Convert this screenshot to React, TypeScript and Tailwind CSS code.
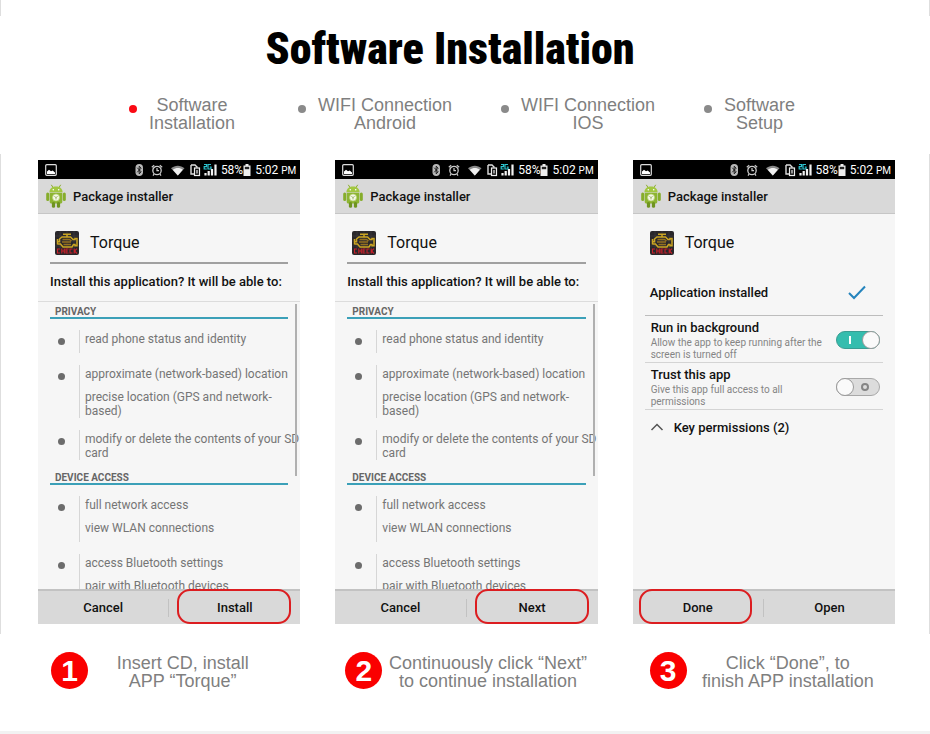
import type { ReactNode } from 'react'

const permissionGroups = [
  {
    title: 'PRIVACY',
    items: [
      ['read phone status and identity'],
      ['approximate (network-based) location', 'precise location (GPS and network-based)'],
      ['modify or delete the contents of your SD card'],
    ],
  },
  {
    title: 'DEVICE ACCESS',
    items: [
      ['full network access', 'view WLAN connections'],
      ['access Bluetooth settings', 'pair with Bluetooth devices'],
    ],
  },
]

const tabs = [
  { first: 'Software', second: 'Installation', active: true },
  { first: 'WIFI Connection', second: 'Android', active: false },
  { first: 'WIFI Connection', second: 'IOS', active: false },
  { first: 'Software', second: 'Setup', active: false },
]

const steps = [
  { first: 'Insert CD, install', second: 'APP “Torque”', pad: 'pl-[13px] pr-[23px]' },
  { first: 'Continuously click “Next”', second: 'to continue installation', pad: 'pl-[10px] pr-1' },
  { first: 'Click “Done”, to', second: 'finish APP installation', pad: 'pl-[17px] pr-[6px]' },
]

function StatusIcons() {
  return (
    <svg viewBox="0 0 84 14" className="h-[14px] w-[84px]" fill="none">
      {/* bluetooth */}
      <rect x="1.5" y="1" width="7.5" height="12" rx="3.7" fill="#b8b8b8" />
      <path d="M3.2 4.7l4 4.2-2 1.9V3.2l2 1.9-4 4.2" stroke="#111" strokeWidth="0.9" />
      {/* alarm */}
      <circle cx="23" cy="7.5" r="4.2" stroke="#ccc" strokeWidth="1.3" />
      <path d="M23 5v2.7h2M17.8 4.2l2.4-2M28.2 4.2l-2.4-2M20 11.2l-1 1.4M26 11.2l1 1.4" stroke="#ccc" strokeWidth="1.2" />
      {/* wifi */}
      <path d="M37 5.2c4-3.4 9.6-3.4 13.5 0L43.8 12.5z" fill="#8a8a8a" />
      <path d="M38.8 6.8c3-2.3 7.2-2.3 10 0L43.8 12.5z" fill="#f0f0f0" />
      {/* sim */}
      <path d="M57 2h4l2.5 2.5M57 2v9h3" stroke="#ddd" strokeWidth="1.4" />
      <rect x="60.5" y="5" width="5" height="7.5" fill="#111" stroke="#eee" strokeWidth="1.2" />
      <path d="M63 7v3.5" stroke="#eee" strokeWidth="1.2" />
      {/* signal */}
      <path d="M70 1.5h2.5v2.2H70.2v2.3h2.6M77 1.5h-3v4.5h3V4h-1.3" stroke="#2cc4d0" strokeWidth="1.2" />
      <path d="M71.5 12.5v-2.5M74.7 12.5v-4.5M78 12.5V6M81.5 12.5V1.5" stroke="#f2f2f2" strokeWidth="2.2" />
    </svg>
  )
}

function StatusBar() {
  return (
    <div className="flex h-[19px] items-center bg-black pr-1 pl-[7px] text-[12px] leading-4 text-white">
      <svg viewBox="0 0 12 12" className="mr-auto size-3" fill="none">
        <rect x="0.7" y="0.7" width="10.6" height="10.6" rx="1" stroke="#ddd" strokeWidth="1.2" />
        <path d="M2 10V7.5l2-1.7 2 1.5 1.7-.8L10 8.5V10z" fill="#fff" />
      </svg>
      <StatusIcons />
      <span className="ml-[3px]">58%</span>
      <svg viewBox="0 0 8 12" className="h-3 w-2">
        <path d="M2.5 0h3v1.5H7.5V12H.5V1.5h2z" fill="#eee" />
        <path d="M1.8 2.8h4.4v2.4H1.8z" fill="#222" />
      </svg>
      <span className="ml-1">
        5:02 <span className="text-[10px] leading-none">PM</span>
      </span>
    </div>
  )
}

function AndroidIcon() {
  return (
    <svg viewBox="0 0 20 24" className="h-6 w-5">
      <path d="M5.3 0.8l2 3.2M14.7 0.8l-2 3.2" stroke="#8aab2c" strokeWidth="1" />
      <path d="M3.4 8.2C3.6 4.6 6.3 2.6 10 2.6s6.4 2 6.6 5.6z" fill="#a2c740" />
      <circle cx="7.3" cy="5.8" r="0.8" fill="#fff" />
      <circle cx="12.7" cy="5.8" r="0.8" fill="#fff" />
      <rect x="0.2" y="8.5" width="3" height="8.5" rx="1.5" fill="#86ad2b" />
      <rect x="16.8" y="8.5" width="3" height="8.5" rx="1.5" fill="#86ad2b" />
      <path d="M3.7 8.8h12.6v9c0 1-.8 1.8-1.8 1.8h-9c-1 0-1.800-.8-1.800-1.800z" fill="#8db531" />
      <rect x="5.9" y="18" width="3.2" height="5.7" rx="1.5" fill="#6f9420" />
      <rect x="10.9" y="18" width="3.2" height="5.7" rx="1.5" fill="#6f9420" />
      <circle cx="10" cy="13.5" r="3.5" fill="#f4f8e6" stroke="#b9d179" strokeWidth="0.7" />
      <path d="M8.4 12.4l1.6 1.2 1.6-1.2M10 13.6v1.8" stroke="#9fb56a" strokeWidth="1" fill="none" />
    </svg>
  )
}

function TorqueIcon() {
  return (
    <svg viewBox="0 0 24 24" className="size-6" fill="none">
      <rect width="24" height="24" rx="2" fill="#29272a" />
      <path d="M0 5h24M0 10h24M0 15h24M5 0v17M12 0v17M19 0v17" stroke="#413d40" strokeWidth="0.6" />
      <path
        d="M8 3.3h8M12 3.3v2.5M2.5 13.5V8M2.5 10.7h2V8L7 6h8.500L18 8.500h2v-1h2v7.200h-2v-1.200h-1.500L17 16H8l-2.500-3h-3"
        stroke="#cba522"
        strokeWidth="1.5"
      />
      <path d="M7.5 8.5h7l2 1.500M7 11h9M8.500 13.500H16" stroke="#94701f" strokeWidth="1.5" />
      {/* red warning strip under the engine */}
      <path
        d="M5 18H2.5v4H5M6.800 17.500v5M9.300 17.500v5M6.800 20h2.500M13.500 18H11v4h2.500M11 20h2M17.500 18H15v4h2.500M19.200 17.500v5M22 17.700L19.500 20l2.500 2.500"
        stroke="#c8202a"
        strokeWidth="1.1"
      />
    </svg>
  )
}

interface FooterButton {
  label: string
  highlight?: string
}

function Phone({ children, actions }: { children: ReactNode; actions: FooterButton[] }) {
  return (
    <article className="flex h-[464px] min-w-0 flex-col bg-[#f6f6f6] font-['Roboto',sans-serif] text-[13px] leading-[15px] text-[#111]">
      <StatusBar />
      <div className="flex h-[35px] shrink-0 items-center gap-[7px] border-b border-[#c6c6c6] bg-[#d9d9d9] pl-2">
        <AndroidIcon />
        <h2 className="font-medium">Package installer</h2>
      </div>
      <div className="flex h-[48px] shrink-0 items-center gap-[11px] pt-[10px] pl-[17px] text-[16px] leading-5">
        <TorqueIcon />
        Torque
      </div>
      {children}
      <footer className="flex h-[35px] shrink-0 items-center border-t-2 border-[#c2c2c2] bg-[#d9d9d9]">
        {actions.map((action, i) => (
          <div key={action.label} className="relative flex flex-1 items-center self-stretch">
            <button type="button" className="h-full flex-1 font-medium">
              {action.label}
            </button>
            {i === 0 && <span className="h-[18px] w-px bg-[#c2c2c2]" />}
            {action.highlight && (
              <span
                className={`pointer-events-none absolute -top-[2px] bottom-0 rounded-[13px] border-2 border-[#dc1d20] ${action.highlight}`}
              />
            )}
          </div>
        ))}
      </footer>
    </article>
  )
}

function PermissionsPhone({ next }: { next: string }) {
  return (
    <Phone actions={[{ label: 'Cancel' }, { label: next, highlight: 'left-2 right-[9px]' }]}>
      <p className="mx-3 flex h-[39px] shrink-0 items-center border-t-2 border-[#a0a0a0] pb-[2px] font-medium whitespace-nowrap">
        Install this application? It will be able to:
      </p>
      <div className="relative min-h-0 flex-1 overflow-hidden border-t border-[#dcdcdc]">
        {permissionGroups.map((group) => (
          <section key={group.title} className="pb-2">
            <h3 className="mx-3 border-b-2 border-[#3ba0b8] pt-[5px] pl-[5px] text-[10px] leading-[10px] font-bold text-[#666]">
              {group.title}
            </h3>
            <ul className="flex flex-col gap-3 pt-[11px] pl-5 text-[12px] leading-[14px] text-[#757575]">
              {group.items.map((lines) => (
                <li key={lines[0]} className="flex">
                  <span className="mt-2 mr-[14px] size-[7px] shrink-0 rounded-full bg-[#6c6c6c]" />
                  <div className="border-l border-[#d6d6d6] pl-[5px]">
                    {lines.map((line) => (
                      <p key={line} className="min-h-[23px] pt-[2px]">
                        {line}
                      </p>
                    ))}
                  </div>
                </li>
              ))}
            </ul>
          </section>
        ))}
        <span className="absolute top-[2px] right-[3px] h-[172px] w-[2px] bg-[#b0b0b0]" />
      </div>
    </Phone>
  )
}

function ToggleRow({ id, title, note, on }: { id: string; title: string; note: string; on: boolean }) {
  return (
    <div className="mx-3 flex items-start justify-between border-b border-[#d4d4d4] pt-1 pr-[3px] pb-px pl-[6px]">
      <label htmlFor={id} className="w-[178px]">
        <span className="block font-medium">{title}</span>
        <span className="block pt-[2px] text-[10px] leading-3 text-[#858585]">{note}</span>
      </label>
      <span className="relative mt-[11px] h-[18px] w-11">
        <input
          id={id}
          type="checkbox"
          defaultChecked={on}
          className="peer block h-[18px] w-11 appearance-none rounded-full border border-[#a8a8a8] bg-[#dcdcdc] checked:border-[#3a9d92] checked:bg-[#35bdae]"
        />
        <span className="pointer-events-none absolute top-0 left-0 size-[18px] rounded-full border border-[#9a9a9a] bg-[#fafafa] peer-checked:left-[26px]" />
        <span className="pointer-events-none absolute top-[5px] left-[25px] size-2 rounded-full border-2 border-[#858585] peer-checked:hidden" />
        <span className="pointer-events-none absolute top-[5px] left-[13px] hidden h-2 w-[2px] bg-white peer-checked:block" />
      </span>
    </div>
  )
}

function InstalledPhone() {
  return (
    <Phone actions={[{ label: 'Done', highlight: 'left-[6px] right-3' }, { label: 'Open' }]}>
      <div className="flex-1">
        <div className="mx-3 flex h-[54px] items-center justify-between border-b border-[#bdbdbd] pt-2 pr-4 pl-[5px] font-medium">
          Application installed
          <svg viewBox="0 0 20 16" className="h-4 w-5" fill="none">
            <path d="M2 8l5 5L18 1.5" stroke="#2584bd" strokeWidth="2" />
          </svg>
        </div>
        <ToggleRow
          id="run-in-background"
          title="Run in background"
          note="Allow the app to keep running after the screen is turned off"
          on
        />
        <ToggleRow id="trust-app" title="Trust this app" note="Give this app full access to all permissions" on={false} />
        <button type="button" className="flex h-[34px] items-center gap-[10px] pl-[17px] font-medium">
          <svg viewBox="0 0 14 8" className="h-2 w-[14px]" fill="none">
            <path d="M1.5 7L7 1.5 12.5 7" stroke="#555" strokeWidth="1.5" />
          </svg>
          Key permissions (2)
        </button>
      </div>
    </Phone>
  )
}

export default function App() {
  return (
    <main className="bg-white font-['Liberation_Sans',Arial,sans-serif] text-[18px] leading-[18px] text-[#7f7f7f]">
      <div className="h-4 border-x border-[#dedede]" />
      <header className="h-[138px]">
        <h1 className="pt-[8px] pr-[30px] text-center font-['Roboto_Condensed',sans-serif] text-[44px] leading-[50px] font-black text-black">
          Software Installation
        </h1>
        <nav className="grid grid-cols-[169fr_203fr_203fr_226fr] pt-[22px] pl-[129px]">
          {tabs.map((tab) => (
            <a key={tab.first + tab.second} href="#" className="flex items-start gap-3">
              <span className={`mt-[9px] size-2 rounded-full ${tab.active ? 'bg-[#fa0a14]' : 'bg-[#8a8a8a]'}`} />
              <span className="text-center">
                {tab.first}
                <br />
                {tab.second}
              </span>
            </a>
          ))}
        </nav>
      </header>

      <section className="grid grid-cols-3 gap-[35px] border-x border-[#dedede] pt-[6px] pr-[34px] pb-[10px] pl-[37px]">
        <PermissionsPhone next="Install" />
        <PermissionsPhone next="Next" />
        <InstalledPhone />
      </section>

      <ol className="grid h-[97px] grid-cols-3 gap-[35px] pt-[18px] pr-[35px] pl-[38px]">
        {steps.map((step, i) => (
          <li key={step.first} className={`flex items-start ${step.pad}`}>
            <span className="flex size-[37px] shrink-0 items-center justify-center rounded-full bg-[#fa0000] text-[30px] leading-8 font-bold text-white">
              {i + 1}
            </span>
            <p className="flex-1 pt-[2px] text-center whitespace-nowrap">
              {step.first}
              <br />
              {step.second}
            </p>
          </li>
        ))}
      </ol>
      <div className="h-[3px] bg-[#f2f2f2]" />
    </main>
  )
}
